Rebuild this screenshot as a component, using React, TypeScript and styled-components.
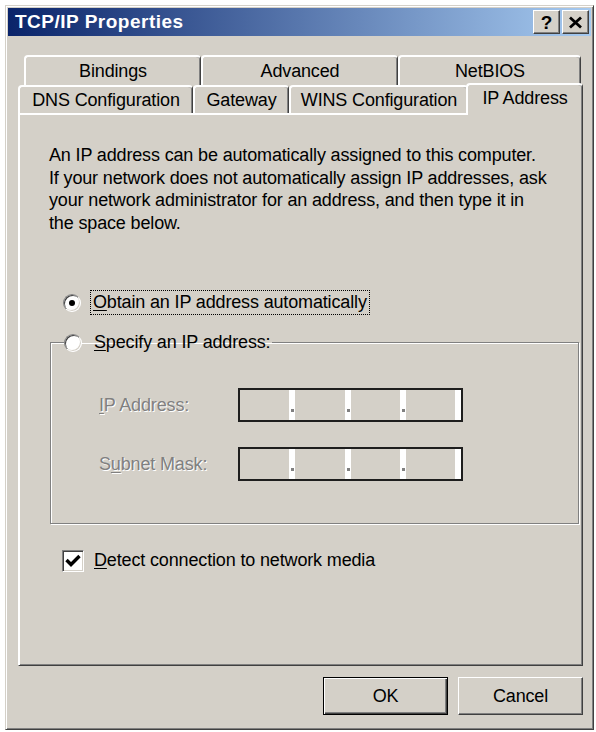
import React from 'react';
import styled, { createGlobalStyle } from 'styled-components';

const FACE = '#d4d0c8';
const SHADOW = '#808080';
const DARK = '#404040';

const Global = createGlobalStyle`
  html, body { margin: 0; padding: 0; background: #fff; }
  body {
    font-family: "Liberation Sans", Arial, sans-serif;
    font-size: 18px;
    letter-spacing: -0.15px;
    color: #000;
  }
`;

const Page = styled.div`
  padding: 5px 0 0 5px;
`;

const Dialog = styled.div`
  box-sizing: border-box;
  width: 589px;
  height: 725px;
  background: ${FACE};
  border: 1px solid;
  border-color: ${FACE} ${DARK} ${DARK} ${FACE};
  box-shadow: inset 1px 1px 0 #fff, inset -1px -1px 0 ${SHADOW};
  padding: 2px;
  display: flex;
  flex-direction: column;
`;

const TitleBar = styled.div`
  height: 28px;
  flex: none;
  display: flex;
  align-items: center;
  padding: 0 2px 0 7px;
  background: linear-gradient(to right, #0a246a, #a6caf0);
`;

const Title = styled.div`
  flex: 1;
  color: #fff;
  font-weight: bold;
  font-size: 19px;
  letter-spacing: 0.5px;
`;

const CaptionButtons = styled.div`
  display: flex;
  gap: 2px;
`;

const CaptionButton = styled.div`
  box-sizing: border-box;
  width: 27px;
  height: 24px;
  background: ${FACE};
  border: 1px solid;
  border-color: #fff ${DARK} ${DARK} #fff;
  box-shadow: inset -1px -1px 0 ${SHADOW};
  display: flex;
  align-items: center;
  justify-content: center;
  font-weight: bold;
  font-size: 19px;
  line-height: 1;
  color: #000;
`;

const Body = styled.div`
  flex: 1;
  display: flex;
  flex-direction: column;
  padding: 19px 8px 0 10px;
`;

const TabStrip = styled.div`
  display: flex;
  flex-direction: column;
`;

const BackRow = styled.div`
  display: flex;
  height: 30px;
  padding: 0 2px 0 6px;
`;

const FrontRow = styled.div`
  display: flex;
  align-items: flex-end;
  height: 28px;
  position: relative;
  z-index: 1;
`;

const Tab = styled.div<{ $w: number; $active?: boolean }>`
  box-sizing: border-box;
  flex: none;
  width: ${(p) => p.$w}px;
  height: ${(p) => (p.$active ? '32px' : '100%')};
  margin: ${(p) => (p.$active ? '0 -2px -2px -2px' : '0')};
  padding-bottom: ${(p) => (p.$active ? '3px' : '0')};
  background: ${FACE};
  border-top: 2px solid #fff;
  border-left: 2px solid #fff;
  border-right: 1px solid ${DARK};
  box-shadow: inset -1px 0 0 ${SHADOW};
  border-radius: 4px 4px 0 0;
  display: flex;
  align-items: center;
  justify-content: center;
  white-space: nowrap;
`;

const Panel = styled.div`
  box-sizing: border-box;
  height: 553px;
  flex: none;
  border: 1px solid;
  border-color: #fff ${DARK} ${DARK} #fff;
  box-shadow: inset 1px 1px 0 #fff, inset -1px -1px 0 ${SHADOW};
  padding: 30px 3px 0 30px;
  display: flex;
  flex-direction: column;
`;

const Intro = styled.p`
  margin: 0;
  line-height: 22.5px;
`;

const OptionRow = styled.div`
  display: flex;
  align-items: center;
  margin: 56px 0 0 14px;
`;

const Radio = styled.span<{ $checked?: boolean }>`
  box-sizing: border-box;
  position: relative;
  flex: none;
  width: 18px;
  height: 18px;
  border-radius: 50%;
  background: #fff;
  border: 1px solid;
  border-color: ${SHADOW} #fff #fff ${SHADOW};
  box-shadow: inset 1px 1px 0 ${DARK}, inset -1px -1px 0 ${FACE};
  &::after {
    content: '';
    display: ${(p) => (p.$checked ? 'block' : 'none')};
    position: absolute;
    left: 5px;
    top: 5px;
    width: 6px;
    height: 6px;
    border-radius: 50%;
    background: #000;
  }
`;

const FocusLabel = styled.span`
  margin-left: 9px;
  padding: 0 2px;
  line-height: 23px;
  border: 1px dotted #000;
`;

const Label = styled.span`
  margin-left: 10px;
  line-height: 23px;
`;

const Key = styled.u`
  text-decoration-thickness: 1px;
  text-underline-offset: 2px;
`;

const Group = styled.fieldset`
  margin: 16px 0 0 1px;
  padding: 0 0 42px 0;
  border: 1px solid ${SHADOW};
  box-shadow: inset 1px 1px 0 #fff, 1px 1px 0 #fff;
  min-width: 0;
`;

const Legend = styled.legend`
  display: flex;
  align-items: center;
  margin-left: 13px;
  padding: 0 2px 0 0;
  height: 23px;
`;

const LegendText = styled.span`
  margin-left: 12px;
  line-height: 23px;
`;

const FieldGrid = styled.div`
  display: grid;
  grid-template-columns: 139px 225px;
  grid-auto-rows: 34px;
  row-gap: 25px;
  align-items: center;
  margin-top: 34px;
  padding-left: 48px;
`;

const DisabledLabel = styled.span`
  color: ${SHADOW};
  text-shadow: 1px 1px 0 #fff;
`;

const IpField = styled.div`
  box-sizing: border-box;
  height: 34px;
  border: 2px solid #1e1e1e;
  display: flex;
`;

const Octet = styled.div`
  flex: 1;
  background: ${FACE};
`;

const Separator = styled.div<{ $dot?: boolean }>`
  position: relative;
  flex: none;
  width: 6px;
  background: #fff;
  &::after {
    content: '';
    display: ${(p) => (p.$dot ? 'block' : 'none')};
    position: absolute;
    left: 2px;
    top: 19px;
    width: 3px;
    height: 3px;
    background: ${SHADOW};
  }
`;

const CheckRow = styled.div`
  display: flex;
  align-items: center;
  margin: 25px 0 0 13px;
  height: 23px;
`;

const CheckBox = styled.span`
  box-sizing: border-box;
  flex: none;
  width: 22px;
  height: 22px;
  background: #fff;
  border: 1px solid;
  border-color: ${SHADOW} #fff #fff ${SHADOW};
  box-shadow: inset 1px 1px 0 ${DARK}, inset -1px -1px 0 ${FACE};
  display: flex;
  align-items: center;
  justify-content: center;
`;

const ButtonRow = styled.div`
  display: flex;
  justify-content: flex-end;
  gap: 10px;
  margin-top: 11px;
`;

const PushButton = styled.button<{ $default?: boolean }>`
  box-sizing: border-box;
  width: 125px;
  height: 38px;
  padding: 0;
  background: ${FACE};
  font-family: "Liberation Sans", Arial, sans-serif;
  font-size: 18px;
  letter-spacing: -0.15px;
  color: #000;
  border: 1px solid;
  border-color: ${(p) => (p.$default ? '#000' : `#fff ${DARK} ${DARK} #fff`)};
  box-shadow: ${(p) =>
    p.$default
      ? `inset 1px 1px 0 #fff, inset -1px -1px 0 ${DARK}, inset -2px -2px 0 ${SHADOW}`
      : `inset -1px -1px 0 ${SHADOW}, inset 1px 1px 0 ${FACE}`};
`;

function IpAddressBox() {
  return (
    <IpField>
      <Octet />
      <Separator $dot />
      <Octet />
      <Separator $dot />
      <Octet />
      <Separator $dot />
      <Octet />
      <Separator />
    </IpField>
  );
}

export default function App() {
  return (
    <>
      <Global />
      <Page>
        <Dialog>
          <TitleBar>
            <Title>TCP/IP Properties</Title>
            <CaptionButtons>
              <CaptionButton>?</CaptionButton>
              <CaptionButton>
                <svg width="15" height="13" viewBox="0 0 15 13">
                  <path d="M2 1.5 L13 11.5 M13 1.5 L2 11.5" stroke="#000" strokeWidth="2.8" fill="none" />
                </svg>
              </CaptionButton>
            </CaptionButtons>
          </TitleBar>
          <Body>
            <TabStrip>
              <BackRow>
                <Tab $w={177}>Bindings</Tab>
                <Tab $w={197}>Advanced</Tab>
                <Tab $w={183}>NetBIOS</Tab>
              </BackRow>
              <FrontRow>
                <Tab $w={175}>DNS Configuration</Tab>
                <Tab $w={96}>Gateway</Tab>
                <Tab $w={179}>WINS Configuration</Tab>
                <Tab $w={117} $active>IP Address</Tab>
              </FrontRow>
            </TabStrip>
            <Panel>
              <Intro>
                An IP address can be automatically assigned to this computer.
                <br />
                If your network does not automatically assign IP addresses, ask
                <br />
                your network administrator for an address, and then type it in
                <br />
                the space below.
              </Intro>
              <OptionRow>
                <Radio $checked />
                <FocusLabel>
                  <Key>O</Key>btain an IP address automatically
                </FocusLabel>
              </OptionRow>
              <Group>
                <Legend>
                  <Radio />
                  <LegendText>
                    <Key>S</Key>pecify an IP address:
                  </LegendText>
                </Legend>
                <FieldGrid>
                  <DisabledLabel>
                    <Key>I</Key>P Address:
                  </DisabledLabel>
                  <IpAddressBox />
                  <DisabledLabel>
                    S<Key>u</Key>bnet Mask:
                  </DisabledLabel>
                  <IpAddressBox />
                </FieldGrid>
              </Group>
              <CheckRow>
                <CheckBox>
                  <svg width="16" height="14" viewBox="0 0 16 14">
                    <path d="M1.5 6 L6 10.5 L14.5 2" stroke="#000" strokeWidth="3.4" fill="none" />
                  </svg>
                </CheckBox>
                <Label>
                  <Key>D</Key>etect connection to network media
                </Label>
              </CheckRow>
            </Panel>
            <ButtonRow>
              <PushButton $default>OK</PushButton>
              <PushButton>Cancel</PushButton>
            </ButtonRow>
          </Body>
        </Dialog>
      </Page>
    </>
  );
}
